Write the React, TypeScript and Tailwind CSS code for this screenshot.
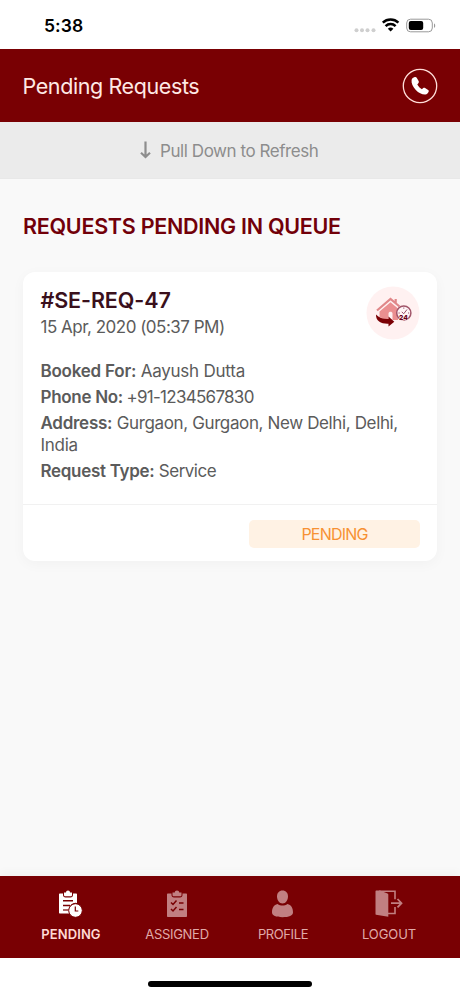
import type { ReactNode } from "react";

function StatusBar() {
  return (
    <div className="flex h-[49px] items-center bg-white pl-[44px] pr-[24px] pt-[3px]">
      <span className="text-[17.5px] font-semibold tracking-[0.1px] text-black">5:38</span>
      <svg className="ml-auto" width="82" height="18" viewBox="0 0 82 18">
        <g fill="#cfcfcf">
          <circle cx="2.5" cy="13.2" r="2" />
          <circle cx="8" cy="13.2" r="2" />
          <circle cx="13.5" cy="13.2" r="2" />
          <circle cx="19.5" cy="13.2" r="2" />
        </g>
        <g fill="none" stroke="#000" strokeWidth="2.5">
          <path d="M28.800 5.600a11.500 11.500 0 0 1 15.600 0" />
          <path d="M31.600 9.100a7 7 0 0 1 10 0" />
        </g>
        <path d="M36.600 14.500 33.800 11.700a4.200 4.200 0 0 1 5.600 0z" fill="#000" />
        <rect x="52.7" y="2.200" width="25.6" height="12.6" rx="3.8" fill="none" stroke="#999" strokeWidth="1" />
        <rect x="54.8" y="4" width="14.4" height="9" rx="2" fill="#000" />
        <path d="M80 6.500v4.400c1.600-.6 1.600-3.800 0-4.400z" fill="#999" />
      </svg>
    </div>
  );
}

function ServiceIcon() {
  return (
    <svg className="shrink-0" width="54" height="54" viewBox="0 0 54 54">
      <circle cx="27" cy="27" r="26.500" fill="#fff1f1" />
      <path d="M11 24.500 24.500 13l9 7.500M29.700 18v-5" fill="none" stroke="#e08789" strokeWidth="2.200" />
      <path d="M13.500 25.500 24.500 16.300 32 22.500V34h-5.500v-6.500c0-2.500-4-2.500-4 0V34H20l-6.500-3z" fill="#ea8f90" />
      <path d="M10 28.500c3 3.500 7.500 4.700 12.500 4.500v-2.500l5.800 5.300-5.800 4.700v-2.800C15.500 38 9.700 35.500 10 28.500z" fill="#7b0005" />
      <circle cx="37.800" cy="27" r="7.100" fill="#fff5f7" stroke="#a15569" strokeWidth="1.500" />
      <path d="m35.800 25.800 1.900 2 3.300-4.300M37.800 21.500v1.200M32.500 27h1.200M42 27h1.200" fill="none" stroke="#96506a" strokeWidth="1" />
      <text x="37.500" y="34.300" textAnchor="middle" fontSize="6.800" fontWeight="800" fill="#68001a" stroke="#fff1f1" strokeWidth="0.800" paintOrder="stroke">24</text>
    </svg>
  );
}

function PendingIcon() {
  return (
    <svg width="24" height="28" viewBox="0 0 24 28" fill="#fff">
      <path d="M1 3.500h3V5c0 1.500 1 2.500 2.500 2.500h5C13 7.500 14 6.500 14 5V3.500h3c.6 0 1 .4 1 1V13a7 7 0 0 0-8.300 7c0 1.500.3 2.600.8 3.500H1c-.6 0-1-.4-1-1v-18c0-.6.4-1 1-1z" />
      <path d="M5 2.500h2C7 1.200 7.800.5 9 .5s2 .7 2 2h2V5c0 .8-.5 1.300-1.300 1.300H6.300C5.500 6.300 5 5.800 5 5z" />
      <path d="M4 10.800h10M4 15.500h7" stroke="#790003" strokeWidth="1.500" />
      <path d="M4 20h5.500" stroke="#790003" strokeWidth="1.200" />
      <circle cx="16.500" cy="20.500" r="6.800" stroke="#790003" strokeWidth="1" />
      <path d="M16.300 16.500V21h3" fill="none" stroke="#790003" strokeWidth="1.200" />
    </svg>
  );
}

function AssignedIcon() {
  return (
    <svg width="20" height="28" viewBox="0 0 20 28" fill="#c17f81">
      <path d="M1 3.500h3.500V5C4.500 6.500 5.500 7.500 7 7.500h6c1.500 0 2.500-1 2.500-2.500V3.500H19c.6 0 1 .4 1 1v21.600c0 .6-.4 1-1 1H1c-.6 0-1-.4-1-1V4.500c0-.6.4-1 1-1z" />
      <path d="M5.500 2.500h2.300c0-1.300.8-2 2.200-2s2.200.7 2.200 2h2.300V5c0 .8-.5 1.300-1.300 1.300H6.800c-.8 0-1.300-.5-1.300-1.300z" />
      <path d="m4 12.500 2 2 3.500-4M4 19l2 2 3.500-4M12 13h4.500M12 19.500h4.500" fill="none" stroke="#790003" strokeWidth="1.500" />
    </svg>
  );
}

function ProfileIcon() {
  return (
    <svg width="22" height="28" viewBox="0 0 22 28" fill="#c17f81">
      <path d="M10.500.5c3.400 0 5.500 2.500 5.500 6s-2.200 7-5.500 7S5 10 5 6.500s2.100-6 5.500-6z" />
      <path d="M0 22.500c0-5 2-7.500 5.500-8.500 3 2 7 2 10 0 3.500 1 5.500 3.500 5.500 8.500 0 3-4 4.700-10.500 4.700S0 25.500 0 22.500z" />
    </svg>
  );
}

function LogoutIcon() {
  return (
    <svg width="28" height="28" viewBox="0 0 28 28" fill="#c17f81">
      <path d="M.5 1.200C.5.800.8.500 1.200.5H5l7.500 3c.5.200.8.500.8 1v22.200L1 24.700c-.3 0-.5-.3-.5-.7z" />
      <path d="M4 1.200h16v8M20 17v6.500h-7" fill="none" stroke="#c17f81" strokeWidth="1.600" />
      <path d="M16 13.200h10M22.500 9l4 4.200-4 4.200" fill="none" stroke="#c17f81" strokeWidth="1.800" />
    </svg>
  );
}

function Tab({ icon, children, className }: { icon: ReactNode; children: ReactNode; className: string }) {
  return (
    <div className={"flex w-[106px] flex-col items-center text-[13px] " + className}>
      <div className="flex h-[28px] justify-center">{icon}</div>
      <div className="mt-[6px] h-[20px] whitespace-nowrap leading-[20px]">{children}</div>
    </div>
  );
}

export default function App() {
  return (
    <div className="flex h-[996px] w-[460px] flex-col overflow-hidden bg-[#f9f9f9] font-['Inter',sans-serif]">
      <StatusBar />
      <header className="flex h-[72.500px] items-center justify-between bg-[#790003] pl-[22.500px] pr-[22px] pt-px">
        <h1 className="whitespace-nowrap text-[21.500px] font-normal tracking-[-0.4px] text-[#ffe9e5]">Pending Requests</h1>
        <svg width="36" height="36" viewBox="0 0 36 36">
          <circle cx="18" cy="18" r="16.700" fill="none" stroke="#ffdcd8" strokeWidth="1.300" />
          <path d="M12.800 9c-1.600.3-3 1.600-3.200 3-.5 3.300 1.300 7 4.200 9.900s6.300 4.800 9.600 4.600c1.500-.1 2.900-1.500 3.300-3 .2-.8 0-1.200-.6-1.600l-3-2c-.7-.4-1.400-.3-1.900.2l-1.300 1.100c-1.800-.9-3.700-2.900-4.600-4.700l1.200-1.500c.5-.6.5-1.200.1-1.900l-1.900-3.300c-.5-.8-1-1-1.900-.8z" fill="#fff" />
        </svg>
      </header>
      <div className="flex h-[57.500px] items-center justify-center border-b border-[#e8e8e8] bg-[#ebebeb] pr-[1.500px] pt-[3px] text-[#8d8d8d]">
        <svg className="mb-[2px] mr-[9px]" width="11" height="18" viewBox="0 0 11 18" fill="none" stroke="currentColor" strokeWidth="2.200">
          <path d="M5.500.5v15.500M1 11.800l4.500 4.200 4.500-4.200" />
        </svg>
        <span className="whitespace-nowrap text-[17px] tracking-[-0.440px]">Pull Down to Refresh</span>
      </div>
      <main className="flex-1 px-[23px] pt-[32px]">
        <h2 className="h-[30px] whitespace-nowrap text-[21.500px] font-semibold leading-[30px] tracking-[-0.270px] text-[#720009]">REQUESTS PENDING IN QUEUE</h2>
        <section className="mt-[31px] flex h-[289px] flex-col rounded-[12px] bg-white shadow-[0_3px_14px_rgba(0,0,0,0.035)]">
          <div className="h-[233px] border-b border-[#f1f1f1] px-[17.500px] pt-[14px] text-[17px] leading-[21.500px] text-[#5b5b5b]">
            <div className="flex h-[54px] justify-between">
              <div>
                <h3 className="h-[28px] whitespace-nowrap text-[21.500px] font-semibold leading-[28px] tracking-[-0.100px] text-[#3a101c]">#SE-REQ-47</h3>
                <p className="mt-[3px] whitespace-nowrap tracking-[-0.500px]">15 Apr, 2020 (05:37 PM)</p>
              </div>
              <ServiceIcon />
            </div>
            <div className="mt-[21px] space-y-[4.600px] whitespace-nowrap">
              <p className="tracking-[-0.230px]"><b className="font-semibold">Booked For:</b> <span>Aayush Dutta</span></p>
              <p><b className="font-semibold tracking-[-0.300px]">Phone No:</b><span className="ml-[3.500px] tracking-[-0.720px]">+91-1234567830</span></p>
              <p className="tracking-[-0.270px]"><b className="font-semibold">Address:</b> <span className="tracking-[-0.370px]">Gurgaon, Gurgaon, New Delhi, Delhi,</span><br /><span>India</span></p>
              <p className="tracking-[-0.310px]"><b className="font-semibold">Request Type:</b> <span className="tracking-[-0.500px]">Service</span></p>
            </div>
          </div>
          <div className="flex h-[56px] items-center justify-end px-[17px] pt-px">
            <span className="flex h-[28px] w-[171px] items-center justify-center rounded-[5px] bg-[#fff2e4] text-[16px] tracking-[-0.800px] text-[#f79133]">PENDING</span>
          </div>
        </section>
      </main>
      <nav className="flex h-[82px] justify-center bg-[#790003] pt-[14px] shadow-[0_-3px_10px_rgba(0,0,0,0.035)]">
        <Tab icon={<PendingIcon />} className="font-semibold tracking-[0.100px] text-[#ffd9d5]">PENDING</Tab>
        <Tab icon={<AssignedIcon />} className="font-normal tracking-[-0.300px] text-[#e0aaa9]">ASSIGNED</Tab>
        <Tab icon={<ProfileIcon />} className="font-normal tracking-[-0.400px] text-[#e0aaa9]">PROFILE</Tab>
        <Tab icon={<LogoutIcon />} className="font-normal tracking-[-0.100px] text-[#e0aaa9]">LOGOUT</Tab>
      </nav>
      <footer className="flex h-[38px] justify-center bg-white pt-[23px]">
        <div className="h-[5.500px] w-[164px] rounded-full bg-black" />
      </footer>
    </div>
  );
}
